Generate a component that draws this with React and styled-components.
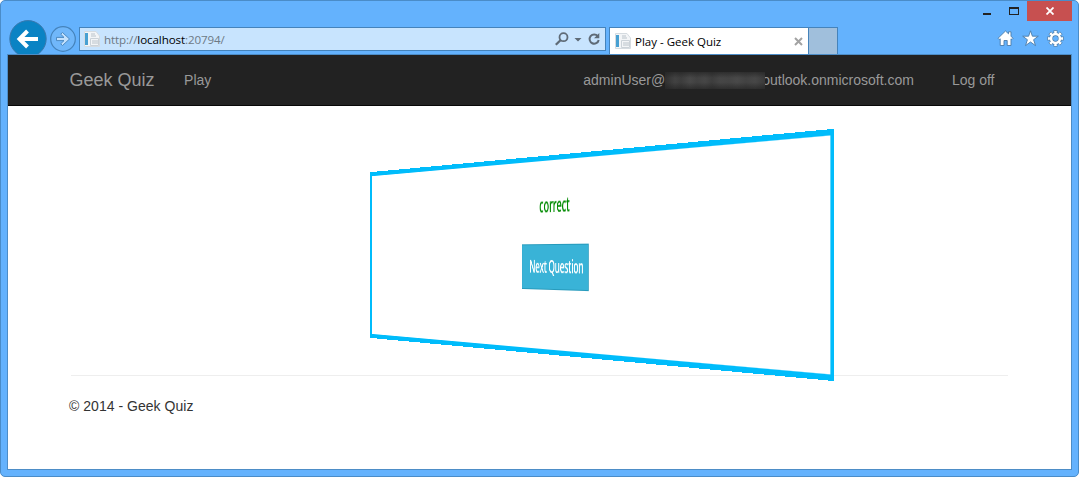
import React from "react";
import styled, { createGlobalStyle } from "styled-components";

const GlobalStyle = createGlobalStyle`
  *, *::before, *::after { box-sizing: border-box; }
  body { margin: 0; background: #fff; overflow: hidden; }
  svg { display: block; flex: none; }
`;

const BrowserWindow = styled.div`
  width: 1079px;
  height: 477px;
  display: flex;
  flex-direction: column;
  padding: 0 6px 6px;
  background: #64b2fd;
  border: 1px solid #4a8cc8;
  border-radius: 5px;
`;

const TitleBar = styled.div`
  height: 20px;
  display: flex;
  justify-content: flex-end;
`;

const CaptionButton = styled.div`
  width: ${(p) => p.$width}px;
  height: 20px;
  display: flex;
  align-items: center;
  justify-content: center;
  background: ${(p) => (p.$close ? "#c75050" : "transparent")};
`;

const Toolbar = styled.div`
  height: 33px;
  display: flex;
  align-items: flex-start;
`;

const NavIcons = styled.div`
  width: 72px;
  height: 34px;
  margin-top: -1px;
  overflow: hidden;
`;

const AddressBar = styled.div`
  width: 527px;
  height: 24px;
  margin-top: 6px;
  padding: 0 4px 0 4px;
  display: flex;
  align-items: center;
  background: #c8e4fe;
  border: 1px solid #4583bb;
`;

const Url = styled.span`
  flex: 1;
  margin: 1px 0 0 4px;
  font-family: "Open Sans", sans-serif;
  font-size: 11.6px;
  line-height: 20px;
  letter-spacing: -0.1px;
  color: #6d7984;
  b { font-weight: 400; color: #000; }
`;

const Tab = styled.div`
  width: 200px;
  height: 27px;
  margin: 6px 0 0 3px;
  padding: 0 5px;
  display: flex;
  align-items: center;
  background: #fff;
  border: 1px solid #4583bb;
  border-bottom: 0;
`;

const TabTitle = styled.span`
  flex: 1;
  margin-left: 4px;
  font-family: "Open Sans", sans-serif;
  font-size: 11.5px;
  color: #000;
`;

const NewTab = styled.div`
  width: 29px;
  height: 27px;
  margin-top: 6px;
  background: #a0bfdc;
  border: 1px solid #4583bb;
  border-width: 1px 1px 0 0;
`;

const Tools = styled.div`
  margin: 9px 8px 0 auto;
  display: flex;
  gap: 8px;
`;

const Page = styled.div`
  flex: 1;
  border: 1px solid #4d8dc7;
  background: #fff;
  font-family: "Liberation Sans", Arial, sans-serif;
  font-size: 14px;
  color: #333;
`;

const NavBar = styled.nav`
  height: 51px;
  padding: 0 76.5px 0 61.5px;
  display: flex;
  align-items: center;
  background: #222;
  border-bottom: 1px solid #080808;
  color: #999;
  white-space: nowrap;
`;

const Brand = styled.span`
  font-size: 18px;
  line-height: 20px;
`;

const NavLink = styled.span`
  margin-left: ${(p) => p.$gap};
  display: flex;
  align-items: center;
  line-height: 20px;
`;

const Redacted = styled.span`
  width: 100px;
  height: 17px;
  margin-right: -3px;
  z-index: 1;
  background:
    linear-gradient(#222a 0%, #2220 35%, #2220 60%, #222a 100%),
    linear-gradient(90deg, #303030, #424242 10%, #3c3c3c 16%, #484848 25%, #414141 32%, #464646 40%, #3d3d3d 47%, #464646 55%, #444 64%, #494949 72%, #424242 81%, #474747 90%, #3a3a3a);
`;

const Stage = styled.main`
  height: 269px;
  padding: 49px 0 0 76px;
  margin-right: 46px;
  perspective: 2000px;
  perspective-origin: 545.8px 149.3px;
`;

const FlipCard = styled.section`
  width: 940px;
  height: 200px;
  border: 5px solid #00bcfb;
  border-left-width: 6px;
  background: #fff;
  display: flex;
  flex-direction: column;
  align-items: center;
  transform: rotateY(-61.8deg);
  font-family: "Open Sans", sans-serif;
`;

const Verdict = styled.p`
  margin: 33px 0 0;
  font-size: 19.5px;
  font-weight: 600;
  line-height: 24px;
  letter-spacing: -0.4px;
  color: #008a00;
`;

const NextButton = styled.button`
  width: 141px;
  height: 46px;
  margin: 27px 0 0;
  padding: 0 0 2px 6px;
  border: 1px solid #269abc;
  background: #39b3d7;
  color: #fff;
  font: 600 17.5px/24px "Open Sans", sans-serif;
  letter-spacing: -0.6px;
  white-space: nowrap;
`;

const Footer = styled.footer`
  width: 937px;
  margin-left: 63px;
  border-top: 1px solid #eee;
  padding-top: 20px;
  line-height: 20px;
  p { margin: 0 0 0 -2px; letter-spacing: 0.03px; }
`;

const BackForward = () => (
  <svg width="72" height="34" viewBox="7 20 72 34">
    <circle cx="28" cy="38.8" r="18.2" fill="#0a83c4" stroke="#3a78ad" />
    <path d="M38 39H20M27.5 31L19.5 39L27.5 47" fill="none" stroke="#fff" strokeWidth="4" />
    <circle cx="63" cy="39" r="12.3" fill="#70b7fa" stroke="#4583bb" strokeWidth="1.2" />
    <path d="M56.5 37.4H64L60.7 34.2L62.5 32.5L69.5 39L62.5 45.5L60.7 43.8L64 40.6H56.5Z" fill="#c3e1fd" stroke="#4583bb" strokeWidth=".9" />
  </svg>
);

const PageIcon = () => (
  <svg width="16" height="16" viewBox="0 0 16 16">
    <path d="M.5.5H12L15.5 5V15.5H.5Z" fill="#f3f5f7" stroke="#d5dbe0" />
    <path d="M1 2H4V14H1Z" fill="#48a0d2" />
    <path d="M7 3H11M7 5H12M8 10H14M8 12H14" stroke="#bac3ca" />
    <path d="M6.5 7.5H14.5V14.5H6.5Z" fill="none" stroke="#cbd2d8" />
  </svg>
);

const AddressIcons = () => (
  <svg width="46" height="16" viewBox="0 0 46 16">
    <g fill="none" stroke="#5f6b77">
      <circle cx="8.5" cy="6.2" r="4" strokeWidth="1.8" />
      <path d="M5.5 9.2L.8 13.8" strokeWidth="2.3" />
      <path d="M42.8 5.2A4.6 4.6 0 1 0 43.7 9" strokeWidth="2" />
    </g>
    <path d="M19.5 7H26.5L23 10.6ZM44.3 2V7.2H39Z" fill="#5f6b77" />
  </svg>
);

const TabClose = () => (
  <svg width="9" height="9" viewBox="0 0 9 9">
    <path d="M1 1L8 8M8 1L1 8" stroke="#a2a2a2" strokeWidth="2" />
  </svg>
);

const HomeIcon = () => (
  <svg width="17" height="17" viewBox="0 0 17 17">
    <path d="M1 8.3L8.5 1L11.5 3.8V1.8H14V6.2L16 8.3L14.8 9.5L14 8.8V15.5H10.2V10.5H7V15.5H3.2V8.8L2.2 9.5Z" fill="#fff" stroke="#4b7ca8" strokeWidth=".9" />
  </svg>
);

const StarIcon = () => (
  <svg width="17" height="17" viewBox="0 0 17 17">
    <path d="M8.5 .8L10.4 6.2H16.3L11.6 9.7L13.5 15.6L8.5 12L3.5 15.6L5.4 9.7L.7 6.2H6.6Z" fill="#fff" stroke="#4b7ca8" strokeWidth=".9" />
  </svg>
);

const spokes = [0, 45, 90, 135, 180, 225, 270, 315];

const GearIcon = () => (
  <svg width="17" height="17" viewBox="0 0 17 17">
    {spokes.map((a) => (
      <rect key={a} x="6.9" y=".7" width="3.2" height="4" fill="#fff" stroke="#4b7ca8" strokeWidth=".8" transform={`rotate(${a} 8.5 8.5)`} />
    ))}
    <circle cx="8.5" cy="8.5" r="4.4" fill="none" stroke="#4b7ca8" strokeWidth="3.8" />
    <circle cx="8.5" cy="8.5" r="4.4" fill="none" stroke="#fff" strokeWidth="2.5" />
    {spokes.map((a) => (
      <rect key={a} x="7.4" y="1.2" width="2.2" height="3" fill="#fff" transform={`rotate(${a} 8.5 8.5)`} />
    ))}
  </svg>
);

export default function App() {
  return (
    <>
      <GlobalStyle />
      <BrowserWindow>
        <TitleBar>
          <CaptionButton $width={26}>
            <svg width="8" height="20"><path d="M0 12H8V14H0Z" fill="#222" /></svg>
          </CaptionButton>
          <CaptionButton $width={27}>
            <svg width="10" height="20"><path d="M0 6H10V14H0ZM1 8V13H9V8Z" fill="#222" fillRule="evenodd" /></svg>
          </CaptionButton>
          <CaptionButton $width={45} $close>
            <svg width="8" height="8"><path d="M.5 .5L7.5 7.5M7.5 .5L.5 7.5" stroke="#fff" strokeWidth="1.8" /></svg>
          </CaptionButton>
        </TitleBar>
        <Toolbar>
          <NavIcons><BackForward /></NavIcons>
          <AddressBar>
            <PageIcon />
            <Url>http://<b>localhost</b>:20794/</Url>
            <AddressIcons />
          </AddressBar>
          <Tab>
            <PageIcon />
            <TabTitle>Play - Geek Quiz</TabTitle>
            <TabClose />
          </Tab>
          <NewTab />
          <Tools>
            <HomeIcon />
            <StarIcon />
            <GearIcon />
          </Tools>
        </Toolbar>
        <Page>
          <NavBar>
            <Brand>Geek Quiz</Brand>
            <NavLink $gap="29.5px">Play</NavLink>
            <NavLink $gap="auto">
              adminUser@<Redacted />outlook.onmicrosoft.com
            </NavLink>
            <NavLink $gap="38px">Log off</NavLink>
          </NavBar>
          <Stage>
            <FlipCard>
              <Verdict>correct</Verdict>
              <NextButton>Next Question</NextButton>
            </FlipCard>
          </Stage>
          <Footer>
            <p>© 2014 - Geek Quiz</p>
          </Footer>
        </Page>
      </BrowserWindow>
    </>
  );
}
